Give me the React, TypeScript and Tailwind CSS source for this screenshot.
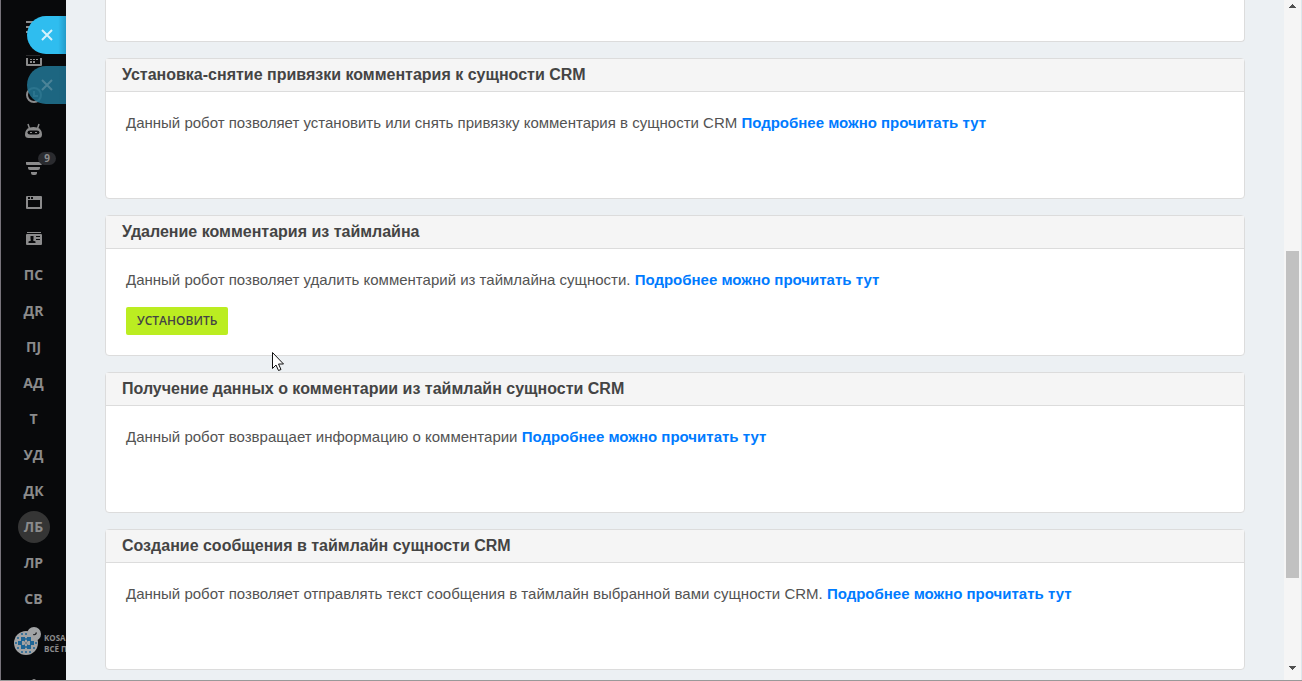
import { ReactNode } from 'react';

interface Robot {
  id: number;
  title: string;
  description: string;
  canInstall?: boolean;
}

interface MenuItem {
  label: string;
  icon?: ReactNode;
  active?: boolean;
  badge?: string;
}

const robots: Robot[] = [
  {
    id: 1,
    title: 'Установка-снятие привязки комментария к сущности CRM',
    description: 'Данный робот позволяет установить или снять привязку комментария в сущности CRM',
  },
  {
    id: 2,
    title: 'Удаление комментария из таймлайна',
    description: 'Данный робот позволяет удалить комментарий из таймлайна сущности.',
    canInstall: true,
  },
  {
    id: 3,
    title: 'Получение данных о комментарии из таймлайн сущности CRM',
    description: 'Данный робот возвращает информацию о комментарии',
  },
  {
    id: 4,
    title: 'Создание сообщения в таймлайн сущности CRM',
    description: 'Данный робот позволяет отправлять текст сообщения в таймлайн выбранной вами сущности CRM.',
  },
];

const MenuIcon = () => (
  <svg width="16" height="12" viewBox="0 0 16 12" fill="currentColor" className="mt-2">
    <path d="M0 0h16v2H0zM0 5h16v2H0zM0 10h16v2H0z" />
  </svg>
);

const CalendarIcon = () => (
  <svg width="16" height="14" viewBox="0 0 16 14" fill="currentColor">
    <path d="M0 3h14v1H0z" opacity="0.25" />
    <path d="M0 6h2v6h12V6h2v7q0 1-1 1H1q-1 0-1-1zM4 9h2v2H4zM4 7h2v1H4zM7 7h2v1H7zM7 9h2v2H7zM10 7h2v1h-2z" />
  </svg>
);

const ClockIcon = () => (
  <svg width="16" height="16" viewBox="0 0 16 16" fill="none" stroke="currentColor" strokeWidth="2">
    <circle cx="8" cy="8" r="7" />
    <path d="M8 4v5h4" />
  </svg>
);

const AndroidIcon = () => (
  <svg width="18" height="16" viewBox="0 0 18 16" className="-mt-px ml-px">
    <path d="M3 1l1.500 4.500M14 1l-1.500 4.500" stroke="currentColor" strokeWidth="1.500" />
    <path d="M5 4.500q3.500-1 7 0 5 1.500 5 7 0 3.500-3.500 3.500h-10Q0 15 0 11.500q0-5.500 5-7z" fill="currentColor" />
    <path d="M5 7.500h7q2.500 0 2.500 2T12 11.500H5q-2.500 0-2.500-2t2.500-2z" fill="#08090b" />
    <path d="M5 9h2v1H5zM10 9h2v1h-2z" fill="currentColor" />
  </svg>
);

const FunnelIcon = () => (
  <svg width="16" height="13" viewBox="0 0 16 13" fill="currentColor" className="mt-0.5">
    <path d="M0 0h16v2q0 1-1 1H1Q0 3 0 2zM2 5h12v1q0 2-2 2H4Q2 8 2 6zM5 10h6v1q0 2-2 2H7q-2 0-2-2z" />
  </svg>
);

const WindowIcon = () => (
  <svg width="16" height="13" viewBox="0 0 16 13" className="-mt-px">
    <path
      fillRule="evenodd"
      d="M1 0h14q1 0 1 1v11q0 1-1 1H1q-1 0-1-1V1q0-1 1-1zM2 4v7h12V4zM2 1v2h2V1zM5 1v2h2V1z"
      fill="currentColor"
    />
  </svg>
);

const ContactIcon = () => (
  <svg width="16" height="13" viewBox="0 0 16 13" className="-mt-px">
    <path d="M1 0h14v1H1zM1 2h14q1 0 1 1v9q0 1-1 1H1q-1 0-1-1V3q0-1 1-1z" fill="currentColor" />
    <path d="M4.500 4h3v3L7 8.500l2.500 1V11H2.500V9.500L5 8.500 4.500 7zM10 4h4v1h-4zM10 7h4v1h-4z" fill="#08090b" />
  </svg>
);

const CloseIcon = () => (
  <svg width="12" height="12" viewBox="0 0 12 12" fill="none" stroke="currentColor" strokeWidth="2">
    <path d="M1 1l10 10M11 1L1 11" />
  </svg>
);

const LogoIcon = () => (
  <svg width="28" height="29" viewBox="0 0 28 29" className="shrink-0">
    <circle cx="12" cy="16" r="12" fill="#a1a3a5" />
    <circle cx="20" cy="7" r="7" fill="#a1a3a5" />
    <path d="M19 7q2 1 3-2l1 1q-1 3-4 2z" fill="#202124" />
    <g fill="#1e6596">
      <path d="M7 10h4v4H7zM13 10h4v4h-4zM7 18h4v4H7zM13 18h4v4h-4zM4 14h4v4H4zM16 14h4v4h-4z" />
      <circle cx="12" cy="7" r="1" />
      <circle cx="12" cy="25" r="1" />
      <circle cx="8" cy="7" r="1" />
      <circle cx="8" cy="25" r="1" />
      <circle cx="16" cy="25" r="1" />
      <circle cx="2" cy="16" r="1" />
      <circle cx="22" cy="16" r="1" />
      <circle cx="4" cy="11" r="1" />
      <circle cx="4" cy="21" r="1" />
      <circle cx="20" cy="21" r="1" />
      <circle cx="12" cy="12" r="1" />
      <circle cx="12" cy="20" r="1" />
    </g>
    <path d="M10 14l4 4M14 14l-4 4" stroke="#77838c" />
  </svg>
);

const menuItems: MenuItem[] = [
  { label: 'Меню', icon: <MenuIcon /> },
  { label: 'Календарь', icon: <CalendarIcon /> },
  { label: 'Время', icon: <ClockIcon /> },
  { label: 'Роботы', icon: <AndroidIcon /> },
  { label: 'Воронка', icon: <FunnelIcon />, badge: '9' },
  { label: 'Сайты', icon: <WindowIcon /> },
  { label: 'Контакты', icon: <ContactIcon /> },
  { label: 'ПС' },
  { label: 'ДR' },
  { label: 'ПJ' },
  { label: 'АД' },
  { label: 'Т' },
  { label: 'УД' },
  { label: 'ДК' },
  { label: 'ЛБ', active: true },
  { label: 'ЛР' },
  { label: 'СВ' },
];

function Sidebar() {
  return (
    <aside className="relative w-[66px] shrink-0 overflow-hidden border-l border-[#77737b] bg-[#08090b] pt-[5px] text-[#8b8b8c]">
      <nav className="flex flex-col">
        {menuItems.map((item) => (
          <a
            key={item.label}
            href="#"
            aria-label={item.label}
            className="relative flex h-9 items-center justify-center text-sm font-bold"
          >
            {item.icon || (
              <span
                className={`flex size-8 items-center justify-center rounded-full ${item.active ? 'bg-[#353535]' : ''}`}
              >
                {item.label}
              </span>
            )}
            {item.badge && (
              <span className="absolute top-[3px] left-[37px] flex h-[13px] w-[18px] items-center justify-center rounded-full bg-[#2a2b2f] text-[10px]">
                {item.badge}
              </span>
            )}
          </a>
        ))}
      </nav>
      <a href="#" className="mt-2.5 ml-[13px] flex items-center gap-0.5 text-[8px] leading-[11px] font-bold whitespace-nowrap">
        <LogoIcon />
        <span className="flex flex-col pt-0.5">
          <span>KOSA</span>
          <span>ВСЁ П</span>
        </span>
      </a>
      <div className="mx-auto mt-[23px] h-1 w-1 rounded-full bg-current" />

      <button
        aria-label="Закрыть"
        className="absolute top-4 right-0 flex h-[38px] w-[39px] items-center rounded-l-full bg-[#2fbdef] bg-linear-to-r from-transparent from-80% to-[#239bc8] pl-3.5 text-[#d5f2fc]"
      >
        <CloseIcon />
      </button>
      <button
        aria-label="Закрыть предыдущую"
        className="absolute top-[66px] right-0 flex h-[38px] w-[39px] items-center rounded-l-full bg-[#20718e]/90 bg-linear-to-r from-transparent from-80% to-[#1a627f] pl-3.5 text-[#4c8498]"
      >
        <CloseIcon />
      </button>
    </aside>
  );
}

function RobotCard({ robot }: { robot: Robot }) {
  return (
    <section className="min-h-[141px] rounded border border-[#dcdcdc] bg-white">
      <h2 className="border-b border-[#dcdcdc] bg-[#f5f5f5] px-4 py-1 text-base font-bold text-[#444]">
        {robot.title}
      </h2>
      <div className="px-5 pt-5">
        <p className="text-[15px] leading-[22px] text-[#535353]">
          {robot.description}{' '}
          <a href="#" className="font-bold text-[#007bff]">
            Подробнее можно прочитать тут
          </a>
        </p>
        {robot.canInstall && (
          <button className="mt-4 h-7 rounded-xs bg-[#bbed21] px-[11px] font-['Open_Sans',sans-serif] text-xs font-semibold text-[#444] uppercase">
            Установить
          </button>
        )}
      </div>
    </section>
  );
}

function ScrollBar() {
  return (
    <div className="flex w-[17px] shrink-0 flex-col items-center justify-between bg-[#f5f5f5] pt-1 pb-2.5">
      <svg width="7" height="4" viewBox="0 0 7 4" fill="#505050" shapeRendering="crispEdges" className="shrink-0">
        <path d="M3 0h1v1h1v1h1v1h1v1H0V3h1V2h1V1h1z" />
      </svg>
      <div className="flex w-[13px] grow flex-col py-4">
        <div className="grow-[227]" />
        <div className="grow-[327] bg-[#c1c1c1]" />
        <div className="grow-[72]" />
      </div>
      <svg width="7" height="4" viewBox="0 0 7 4" fill="#505050" shapeRendering="crispEdges" className="shrink-0">
        <path d="M0 0h7v1H6v1H5v1H4v1H3V3H2V2H1V1H0z" />
      </svg>
    </div>
  );
}

export default function App() {
  return (
    <div className="relative flex h-screen overflow-hidden border-b border-[#999] bg-[#ecf0f3] font-['Open_Sans',sans-serif]">
      <Sidebar />
      <main className="flex min-w-0 grow flex-col gap-4 overflow-hidden px-[39px] font-['Liberation_Sans',Arial,sans-serif]">
        <div className="h-[42px] shrink-0 rounded-b border border-t-0 border-[#dcdcdc] bg-white" />
        {robots.map((robot) => (
          <RobotCard key={robot.id} robot={robot} />
        ))}
      </main>
      <ScrollBar />
      <div className="w-px shrink-0 bg-[#dce8ed]" />

      <svg
        width="12"
        height="19"
        viewBox="0 0 12 19"
        className="pointer-events-none absolute top-[352px] left-[272px]"
      >
        <path
          d="M.5.5v16l3.500-3.500 2.500 5.500 2.500-1-2.500-5.500h5z"
          fill="#fff"
          stroke="#111"
        />
      </svg>
    </div>
  );
}
